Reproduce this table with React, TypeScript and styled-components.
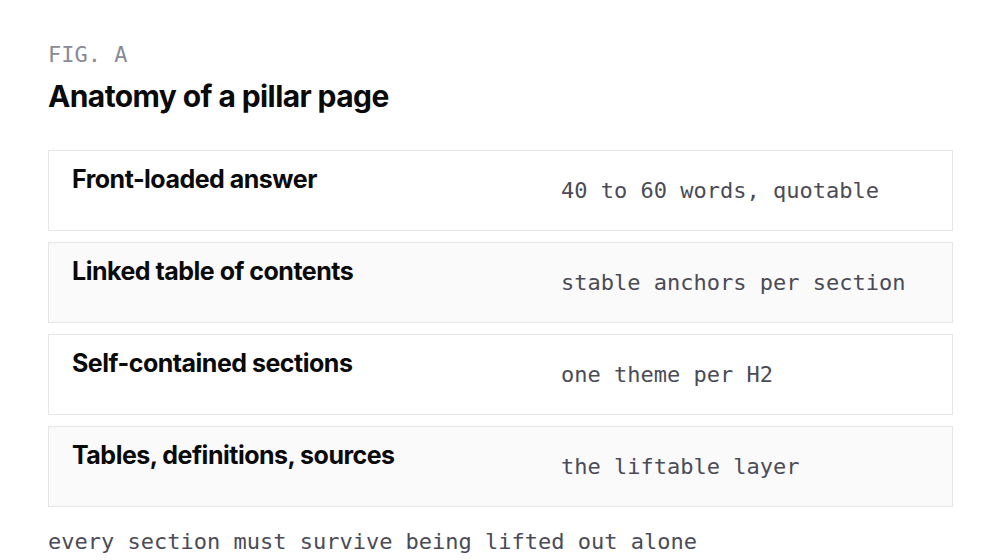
import styled, { createGlobalStyle } from 'styled-components';

const GlobalStyle = createGlobalStyle`
    html, body {
        margin: 0;
        padding: 0;
        background: #ffffff;
    }
    body {
        font-family: Inter, "Noto Sans", sans-serif;
        color: #0a0a0a;
    }
`;

const StyledPage = styled.div`
    width: 1000px;
    height: 560px;
    box-sizing: border-box;
    padding: 42px 47px 0 48px;
    overflow: hidden;
`;

const StyledEyebrow = styled.div`
    font-family: "DejaVu Sans Mono", monospace;
    font-size: 22px;
    line-height: 26px;
    color: #8a8a94;
`;

const StyledTitle = styled.h1`
    margin: 8px 0 0 0;
    font-family: Inter, sans-serif;
    font-weight: 700;
    font-size: 30px;
    letter-spacing: -0.02em;
    line-height: 40px;
    color: #0a0a0a;
`;

const StyledList = styled.div`
    display: flex;
    flex-direction: column;
    gap: 11px;
    margin-top: 34px;
`;

const StyledRow = styled.div<{ $shaded: boolean }>`
    display: grid;
    grid-template-columns: 1fr 367px;
    align-items: center;
    height: 81px;
    box-sizing: border-box;
    padding: 0 24px 0 23px;
    border: 1px solid #e6e6e8;
    background: ${(p) => (p.$shaded ? '#fafafa' : '#ffffff')};
`;

const StyledRowTitle = styled.div`
    align-self: start;
    padding-top: 13px;
    font-family: Inter, sans-serif;
    font-weight: 700;
    font-size: 25px;
    letter-spacing: -0.02em;
    line-height: 30px;
    color: #0a0a0a;
`;

const StyledRowNote = styled.div`
    font-family: "DejaVu Sans Mono", monospace;
    font-size: 22px;
    line-height: 26px;
    color: #4b4b57;
    white-space: nowrap;
`;

const StyledFooter = styled.div`
    margin-top: 22px;
    font-family: "DejaVu Sans Mono", monospace;
    font-size: 22px;
    line-height: 26px;
    color: #4b4b57;
    white-space: nowrap;
`;

const rows = [
    { title: 'Front-loaded answer', note: '40 to 60 words, quotable' },
    { title: 'Linked table of contents', note: 'stable anchors per section' },
    { title: 'Self-contained sections', note: 'one theme per H2' },
    { title: 'Tables, definitions, sources', note: 'the liftable layer' },
];

const App = () => {
    return (
        <>
            <GlobalStyle />
            <StyledPage>
                <StyledEyebrow>FIG. A</StyledEyebrow>
                <StyledTitle>Anatomy of a pillar page</StyledTitle>
                <StyledList>
                    {rows.map((r, i) => (
                        <StyledRow key={r.title} $shaded={i % 2 === 1}>
                            <StyledRowTitle>{r.title}</StyledRowTitle>
                            <StyledRowNote>{r.note}</StyledRowNote>
                        </StyledRow>
                    ))}
                </StyledList>
                <StyledFooter>every section must survive being lifted out alone</StyledFooter>
            </StyledPage>
        </>
    );
};

export default App;
